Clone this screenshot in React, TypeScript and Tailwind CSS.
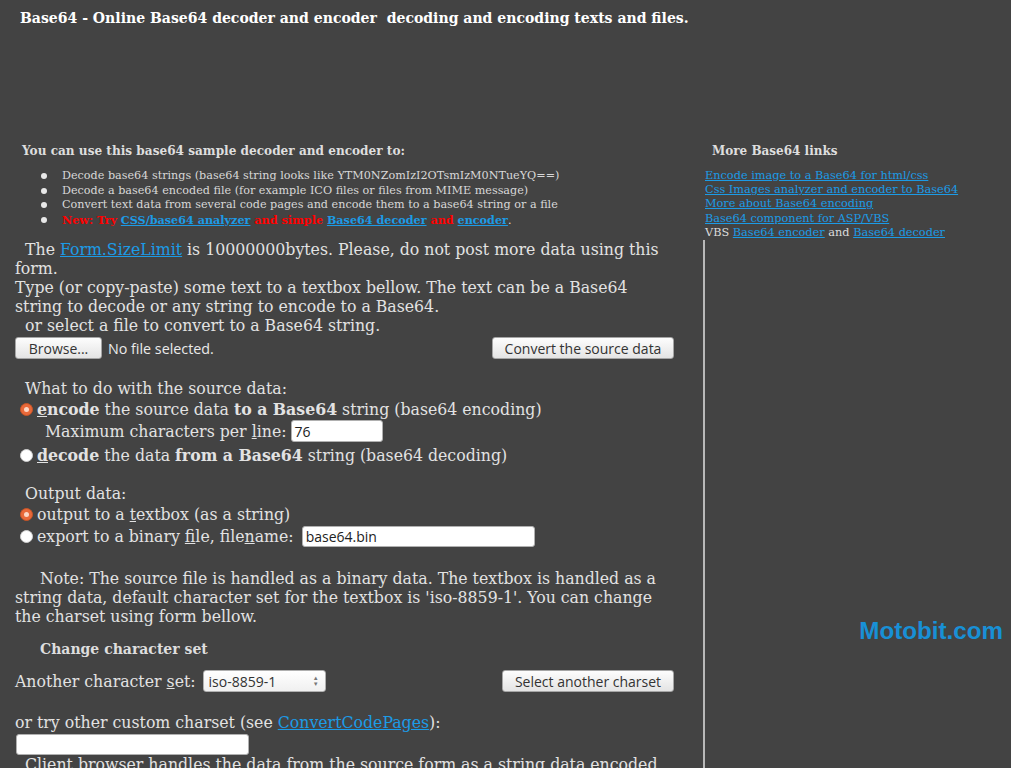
import React from 'react';

const serifC = "font-['DejaVu_Serif_Condensed','DejaVu_Serif',serif]";
const serif = "font-['DejaVu_Serif',serif]";
const sans = "font-['Open_Sans','Noto_Sans',sans-serif]";
const link = 'text-[#1c9be6] underline';

const Radio: React.FC<{ checked?: boolean }> = ({ checked }) =>
  checked ? (
    <span className="inline-flex items-center justify-center w-[13px] h-[13px] rounded-full bg-[#e8693a] border border-[#c85426] shrink-0">
      <span className="w-[5px] h-[5px] rounded-full bg-[#fbd7c6]" />
    </span>
  ) : (
    <span className="inline-block w-[13px] h-[13px] rounded-full bg-white border border-[#d0d0d0] shrink-0" />
  );

const Button: React.FC<{ label: string; w: string }> = ({ label, w }) => (
  <div
    className={`${w} h-[22px] flex items-center justify-center rounded-[3px] border border-[#a5a5a5] bg-linear-to-b from-[#fdfdfd] to-[#e4e4e4] text-[14px] text-[#333] ${sans}`}
  >
    {label}
  </div>
);

const TextBox: React.FC<{ value?: string; w: string; h?: string }> = ({ value, w, h = 'h-[22px]' }) => (
  <div
    className={`${w} ${h} flex items-center px-[3px] rounded-[3px] border border-[#b0b0b0] bg-white text-[14px] text-[#222] ${sans}`}
  >
    {value}
  </div>
);

export default function App() {
  return (
    <div className="w-[1024px] h-[768px] overflow-hidden bg-white">
      <div className="w-[1011px] h-[768px] bg-[#434343] flex flex-col">
        {/* title + ad space */}
        <div className="h-[140px] shrink-0">
          <div className={`pt-[8px] pl-[20px] leading-[20px] text-[15.6px] font-bold text-white whitespace-nowrap ${serifC}`}>
            Base64 - Online Base64 decoder and encoder&nbsp; decoding and encoding texts and files.
          </div>
        </div>

        <div className="flex flex-1 min-h-0">
          {/* left column */}
          <div className="w-[700px] shrink-0">
            <div className="ml-[15px] w-[660px] text-[#e2e2e2]">
              <div className={`pt-[1px] pl-[7px] h-[20px] leading-[20px] text-[12.1px] font-bold text-[#dedede] ${serif}`}>
                You can use this base64 sample decoder and encoder to:
              </div>
              <ul className={`mt-[9px] text-[11.2px] leading-[14.5px] text-[#d8d8d8] whitespace-nowrap ${serif}`}>
                {[
                  'Decode base64 strings (base64 string looks like YTM0NZomIzI2OTsmIzM0NTueYQ==)',
                  'Decode a base64 encoded file (for example ICO files or files from MIME message)',
                  'Convert text data from several code pages and encode them to a base64 string or a file',
                ].map((t) => (
                  <li key={t} className="flex items-center">
                    <span className="ml-[26px] mr-[15px] w-[6px] h-[6px] rounded-full bg-[#e8e8e8] shrink-0" />
                    <span>{t}</span>
                  </li>
                ))}
                <li className="flex items-center">
                  <span className="ml-[26px] mr-[15px] w-[6px] h-[6px] rounded-full bg-[#e8e8e8] shrink-0" />
                  <span>
                    <b className="text-[#ff0000]">New: Try </b>
                    <b className={link}>CSS/base64 analyzer</b>
                    <b className="text-[#ff0000]"> and simple </b>
                    <b className={link}>Base64 decoder</b>
                    <b className="text-[#ff0000]"> and </b>
                    <b className={link}>encoder</b>.
                  </span>
                </li>
              </ul>

              <div className={`text-[17.5px] leading-[19px] ${serifC}`}>
                <p className="mt-[12px] whitespace-nowrap">
                  &nbsp;&nbsp;The <span className={link}>Form.SizeLimit</span> is 10000000bytes. Please, do not post more data using this
                  <br />
                  form.
                  <br />
                  Type (or copy-paste) some text to a textbox bellow. The text can be a Base64
                  <br />
                  string to decode or any string to encode to a Base64.
                  <br />
                  &nbsp;&nbsp;or select a file to convert to a Base64 string.
                </p>

                <div className="mt-[2px] h-[22px] flex items-center">
                  <Button label="Browse..." w="w-[87px]" />
                  <span className={`ml-[6px] text-[14.3px] text-[#eaeaea] ${sans}`}>No file selected.</span>
                  <div className="ml-auto mr-[1px]">
                    <Button label="Convert the source data" w="w-[182px]" />
                  </div>
                </div>

                <div className="mt-[19.5px] h-[19px] pl-[10px]">What to do with the source data:</div>
                <div className="mt-[1px] h-[21px] flex items-center pl-[5px]">
                  <Radio checked />
                  <span className="ml-[4px]">
                    <b>
                      <u>e</u>ncode
                    </b>{' '}
                    the source data <b>to a Base64</b> string (base64 encoding)
                  </span>
                </div>
                <div className="mt-[0.5px] h-[22px] flex items-center pl-[30px]">
                  <span>
                    Maximum characters per <u>l</u>ine:
                  </span>
                  <div className="ml-[4px]">
                    <TextBox value="76" w="w-[92px]" />
                  </div>
                </div>
                <div className="mt-[2px] h-[22px] flex items-center pl-[5px]">
                  <Radio />
                  <span className="ml-[4px]">
                    <b>
                      <u>d</u>ecode
                    </b>{' '}
                    the data <b>from a Base64</b> string (base64 decoding)
                  </span>
                </div>

                <div className="mt-[17.5px] h-[19px] pl-[10px]">Output data:</div>
                <div className="mt-[0.5px] h-[22px] flex items-center pl-[5px]">
                  <Radio checked />
                  <span className="ml-[4px]">
                    output to a <u>t</u>extbox (as a string)
                  </span>
                </div>
                <div className="h-[22px] flex items-center pl-[5px]">
                  <Radio />
                  <span className="ml-[4px]">
                    export to a binary <u>f</u>ile, file<u>n</u>ame:
                  </span>
                  <div className="ml-[8px]">
                    <TextBox value="base64.bin" w="w-[233px]" h="h-[21px]" />
                  </div>
                </div>

                <p className="mt-[21.5px] whitespace-nowrap">
                  &nbsp;&nbsp;&nbsp;&nbsp;&nbsp;Note: The source file is handled as a binary data. The textbox is handled as a
                  <br />
                  string data, default character set for the textbox is 'iso-8859-1'. You can change
                  <br />
                  the charset using form bellow.
                </p>

                <div className={`mt-[13.5px] h-[20px] leading-[20px] pl-[25px] text-[14px] font-bold text-[#dedede] ${serif}`}>
                  Change character set
                </div>

                <div className="mt-[11px] h-[22px] flex items-center">
                  <span>
                    Another character <u>s</u>et:
                  </span>
                  <div className={`ml-[7px] w-[123px] h-[22px] flex items-center justify-between pl-[5px] pr-[6px] rounded-[3px] border border-[#b0b0b0] bg-linear-to-b from-white to-[#f0f0f0] text-[14px] text-[#333] ${sans}`}>
                    <span>iso-8859-1</span>
                    <span className="flex flex-col items-center text-[6px] leading-[6px] text-[#777]">
                      <span>▲</span>
                      <span>▼</span>
                    </span>
                  </div>
                  <div className="ml-auto mr-[1px]">
                    <Button label="Select another charset" w="w-[172px]" />
                  </div>
                </div>

                <div className="mt-[20.5px] h-[19px]">
                  or try other custom charset (see <span className={link}>ConvertCodePages</span>):
                </div>
                <div className="mt-[2.5px] ml-[1px]">
                  <TextBox w="w-[233px]" h="h-[21px]" />
                </div>
                <div className="h-[19px] whitespace-nowrap">
                  &nbsp;&nbsp;Client browser handles the data from the source form as a string data encoded
                </div>
              </div>
            </div>
          </div>

          {/* right column */}
          <div className="flex-1 flex flex-col">
            <div className={`pt-[1px] pl-[12px] h-[20px] leading-[20px] text-[12px] font-bold text-[#dedede] ${serif}`}>
              More Base64 links
            </div>
            <div className={`mt-[8.8px] pl-[5px] text-[11.3px] leading-[14.3px] text-[#dcdcdc] whitespace-nowrap ${serif}`}>
              <div className={link}>Encode image to a Base64 for html/css</div>
              <div className={link}>Css Images analyzer and encoder to Base64</div>
              <div className={link}>More about Base64 encoding</div>
              <div className={link}>Base64 component for ASP/VBS</div>
              <div>
                VBS <span className={link}>Base64 encoder</span> and <span className={link}>Base64 decoder</span>
              </div>
            </div>
            <div className="ml-[3px] flex-1 border-l-2 border-[#b8b8b8] pt-[377px] pr-[8px] text-right">
              <span className="font-['Liberation_Sans',Arial,sans-serif] font-bold text-[24.2px] leading-[28px] text-[#1890d6]">
                Motobit.com
              </span>
            </div>
          </div>
        </div>
      </div>
    </div>
  );
}
